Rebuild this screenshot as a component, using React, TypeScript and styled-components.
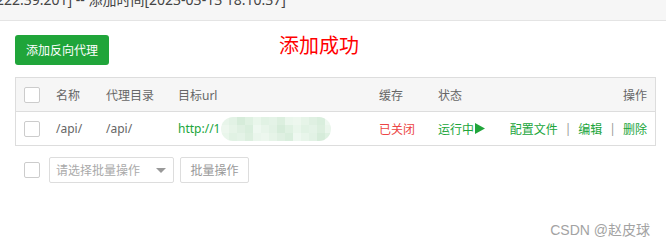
import React from "react";
import styled, { createGlobalStyle } from "styled-components";

const Global = createGlobalStyle`
  html, body { margin: 0; padding: 0; background: #fff; }
  body {
    font-family: "Noto Sans", "Noto Sans CJK SC", sans-serif;
    font-size: 12px;
    color: #666;
  }
  #root { position: relative; width: 666px; height: 251px; overflow: hidden; }
`;

const TopBar = styled.div`
  height: 20px;
  background: #f6f6f6;
  border-bottom: 1px solid #e4e4e4;
  overflow: hidden;
`;

const TopText = styled.div`
  font-size: 14px;
  line-height: 20px;
  color: #444;
  margin-top: -10px;
  margin-left: -4px;
  white-space: nowrap;
`;

const Main = styled.div`
  padding: 14px 10px 0 15px;
`;

const Toolbar = styled.div`
  display: flex;
  align-items: flex-start;
  height: 30px;
`;

const PrimaryButton = styled.button`
  width: 94px;
  height: 30px;
  padding: 0;
  border: none;
  border-radius: 3px;
  background: #20a53a;
  color: #fff;
  font-family: inherit;
  font-size: 12px;
`;

const Notice = styled.span`
  margin-left: 170px;
  margin-top: 1px;
  font-size: 20px;
  line-height: 20px;
  color: #f00;
`;

const Table = styled.div`
  margin-top: 12px;
  width: 641px;
  box-sizing: border-box;
  border: 1px solid #ddd;
`;

const Row = styled.div<{ $head?: boolean }>`
  display: grid;
  grid-template-columns: 40px 50px 72px 201px 59px 1fr auto;
  align-items: center;
  height: 33px;
  padding-right: 8px;
  background: ${(p) => (p.$head ? "#f6f6f6" : "#fff")};
  border-bottom: ${(p) => (p.$head ? "1px solid #ddd" : "none")};
  color: #666;
  white-space: nowrap;
`;

const CheckCell = styled.div`
  display: flex;
  align-items: center;
  padding-left: 8px;
`;

const Checkbox = styled.span`
  display: inline-block;
  width: 16px;
  height: 16px;
  box-sizing: border-box;
  border: 1px solid #ccc;
  border-radius: 2px;
  background: #fff;
`;

const Cell = styled.div<{ $tone?: "green" | "red" }>`
  display: flex;
  align-items: center;
  color: ${(p) =>
    p.$tone === "green" ? "#20a53a" : p.$tone === "red" ? "#ec4545" : "#666"};
`;

const OpsCell = styled.div`
  display: flex;
  align-items: center;
  justify-content: flex-end;
`;

const Link = styled.a`
  color: #20a53a;
  text-decoration: none;
`;

const Sep = styled.span`
  color: #999;
  margin: 0 7px;
`;

const Blur = styled.span`
  display: inline-grid;
  grid-template-columns: repeat(14, 8px);
  grid-auto-rows: 8px;
  width: 110px;
  height: 24px;
  border-radius: 12px;
  overflow: hidden;
  margin-left: 1px;
`;

const Tile = styled.span<{ $c: string }>`
  background: ${(p) => p.$c};
`;

const BatchBar = styled.div`
  display: flex;
  align-items: center;
  margin-top: 11px;
  padding-left: 9px;
  height: 26px;
`;

const Select = styled.div`
  margin-left: 9px;
  width: 125px;
  height: 26px;
  box-sizing: border-box;
  border: 1px solid #ddd;
  border-radius: 2px;
  display: flex;
  align-items: center;
  justify-content: space-between;
  padding: 0 7px 0 6px;
  color: #aaa;
`;

const Caret = styled.span`
  width: 0;
  height: 0;
  border-left: 5px solid transparent;
  border-right: 5px solid transparent;
  border-top: 5px solid #999;
`;

const GhostButton = styled.button`
  margin-left: 6px;
  width: 69px;
  height: 26px;
  padding: 0;
  box-sizing: border-box;
  border: 1px solid #ddd;
  border-radius: 2px;
  background: #fff;
  color: #999;
  font-family: inherit;
  font-size: 12px;
`;

const Watermark = styled.div`
  position: absolute;
  right: 16px;
  top: 219px;
  font-family: "Liberation Sans", "Noto Sans CJK SC", sans-serif;
  font-size: 14px;
  color: #a3a3a3;
`;

const tileColors = [
  "#e8f5ea", "#dff1e2", "#e4f3e7", "#edf7ee", "#d9eedd", "#e2f2e5", "#e9f6eb",
  "#dcefdf", "#e6f4e8", "#eef8f0", "#d6ecda", "#e1f2e4", "#eaf6ec", "#dff0e2",
];

const Play = () => (
  <svg width="10" height="11" viewBox="0 0 10 11" style={{ marginLeft: 1 }}>
    <path d="M0 0 L10 5.5 L0 11 Z" fill="#20a53a" />
  </svg>
);

export default function App() {
  const tiles = Array.from({ length: 42 }, (_, i) => tileColors[(i * 5 + Math.floor(i / 14) * 3) % tileColors.length]);
  return (
    <>
      <Global />
      <TopBar>
        <TopText>222.39.201] -- 添加时间[2023-03-13 18:10:37]</TopText>
      </TopBar>
      <Main>
        <Toolbar>
          <PrimaryButton>添加反向代理</PrimaryButton>
          <Notice>添加成功</Notice>
        </Toolbar>
        <Table>
          <Row $head>
            <CheckCell><Checkbox /></CheckCell>
            <Cell>名称</Cell>
            <Cell>代理目录</Cell>
            <Cell>目标url</Cell>
            <Cell>缓存</Cell>
            <Cell>状态</Cell>
            <OpsCell>操作</OpsCell>
          </Row>
          <Row>
            <CheckCell><Checkbox /></CheckCell>
            <Cell>/api/</Cell>
            <Cell>/api/</Cell>
            <Cell $tone="green">
              http://1
              <Blur>
                {tiles.map((c, i) => (
                  <Tile key={i} $c={c} />
                ))}
              </Blur>
            </Cell>
            <Cell $tone="red">已关闭</Cell>
            <Cell $tone="green">运行中<Play /></Cell>
            <OpsCell>
              <Link>配置文件</Link>
              <Sep>|</Sep>
              <Link>编辑</Link>
              <Sep>|</Sep>
              <Link>删除</Link>
            </OpsCell>
          </Row>
        </Table>
        <BatchBar>
          <Checkbox />
          <Select>
            <span>请选择批量操作</span>
            <Caret />
          </Select>
          <GhostButton>批量操作</GhostButton>
        </BatchBar>
      </Main>
      <Watermark>CSDN @赵皮球</Watermark>
    </>
  );
}
